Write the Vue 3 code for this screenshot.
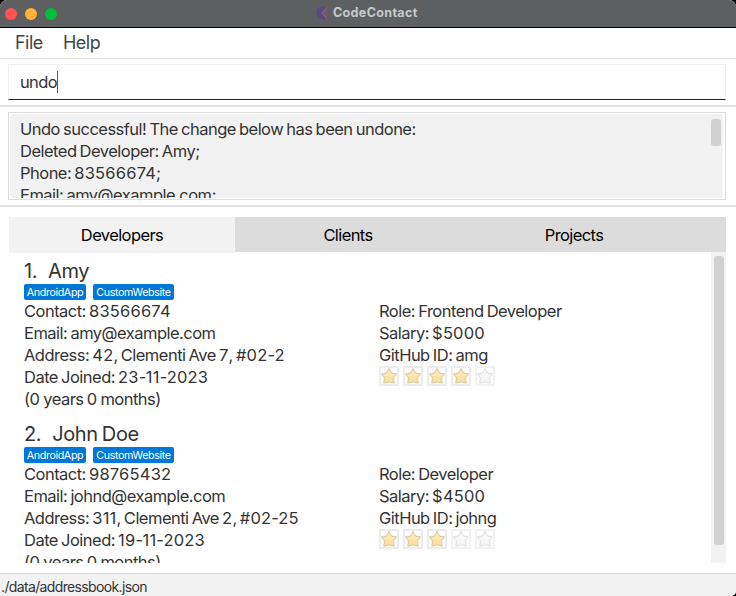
<script setup>
import { h } from 'vue'

const output = [
  'Undo successful! The change below has been undone:',
  'Deleted Developer: Amy;',
  'Phone: 83566674;',
  'Email: amy@example.com;',
]
const tabs = ['Developers', 'Clients', 'Projects']
const developers = [
  {
    name: 'Amy',
    left: ['Contact: 83566674', 'Email: amy@example.com', 'Address: 42, Clementi Ave 7, #02-2', 'Date Joined: 23-11-2023', '(0 years 0 months)'],
    right: ['Role: Frontend Developer', 'Salary: $5000', 'GitHub ID: amg'],
    rating: 4,
  },
  {
    name: 'John Doe',
    left: ['Contact: 98765432', 'Email: johnd@example.com', 'Address: 311, Clementi Ave 2, #02-25', 'Date Joined: 19-11-2023', '(0 years 0 months)'],
    right: ['Role: Developer', 'Salary: $4500', 'GitHub ID: johng'],
    rating: 3,
  },
]

// A line of text whose digit runs are set with wider tracking than its words.
const TextLine = (props) =>
  h('div', { class: 'line' }, props.text.split(/([#$\d]+)/).filter(Boolean).map((part) =>
    /[\d]/.test(part) ? h('span', { class: 'digits' }, part) : part))
TextLine.props = ['text']
</script>

<template>
  <div class="window">
    <header class="titlebar">
      <div class="lights"><i class="red"></i><i class="amber"></i><i class="green"></i></div>
      <div class="title">
        <svg width="13" height="14" viewBox="0 0 13 14">
          <path d="M7 .5C3 .5.5 3.300.5 7S3 13.500 7 13.500L11 12 6 7 11 2Z" fill="#5b4a7c" />
          <path d="M11 1.500 6.500 7l4.500 5.500" fill="none" stroke="#9c5287" stroke-width="1.600" />
        </svg>
        <span>CodeContact</span>
      </div>
    </header>
    <nav class="menu"><span class="file">File</span><span class="help">Help</span></nav>
    <section class="command"><div class="field"><span>undo</span><i class="caret"></i></div></section>
    <section class="result">
      <div class="frame">
        <div class="pane">
          <div class="lines"><TextLine v-for="l in output" :key="l" :text="l" /></div>
          <i class="thumb"></i>
        </div>
      </div>
    </section>
    <main class="content">
      <div class="tabs">
        <div v-for="(t, i) in tabs" :key="t" class="tab" :class="{ active: i === 0 }">{{ t }}</div>
        <div class="rest"></div>
      </div>
      <div class="body">
        <div class="list">
          <article v-for="(d, i) in developers" :key="d.name" class="card">
            <h2><span class="num">{{ i + 1 }}.</span><span>{{ d.name }}</span></h2>
            <div class="tags"><span class="android">AndroidApp</span><span class="custom">CustomWebsite</span></div>
            <div class="cols">
              <div class="left"><TextLine v-for="l in d.left" :key="l" :text="l" /></div>
              <div class="right">
                <TextLine v-for="l in d.right" :key="l" :text="l" />
                <div class="stars">
                  <svg v-for="n in 5" :key="n" :class="{ off: n > d.rating }" width="20" height="20" viewBox="0 0 20 20">
                    <rect x="1" y="1" width="18" height="18" fill="#fff" stroke="#ececec" stroke-width="2" />
                    <path class="star" d="M10 2.400 12.500 7 17.600 7.900 14.600 11.800 15.200 17.200 10 15.900 4.800 17.200 5.400 11.800 2.400 7.900 7.500 7Z" />
                    <path class="shine" d="M10 4 12 7.800 16 8.600 12 11 8 11 4 8.600 8 7.800Z" />
                  </svg>
                </div>
              </div>
            </div>
          </article>
        </div>
        <div class="track"><i></i></div>
      </div>
    </main>
    <footer class="status">./data/addressbook.json</footer>
  </div>
</template>

<style>
body { margin: 0; background: #000; overflow: hidden; }
</style>
<style scoped>
* { box-sizing: border-box; }
.window { width: 736px; height: 596px; display: flex; flex-direction: column; background: #fff; border-radius: 7px 7px 5px 0; overflow: hidden; font-family: Inter, "Liberation Sans", sans-serif; font-size: 16.5px; letter-spacing: -0.52px; word-spacing: -1px; color: #333; white-space: nowrap; }
.titlebar { height: 28px; flex: none; background: #5e5f61; border-bottom: 1px solid #000; display: grid; grid-template-columns: 316px 1fr; align-items: center; }
.lights { display: flex; gap: 8px; padding-left: 5px; }
.lights i { width: 12px; height: 12px; border-radius: 50%; }
.red { background: #ff5450; }
.amber { background: #ffb138; }
.green { background: #00c03a; }
.title { display: flex; align-items: center; gap: 4px; font-size: 12.5px; font-weight: 700; letter-spacing: 0.35px; color: #c9c9ca; line-height: 16px; padding-bottom: 2px; }
.menu { height: 31px; flex: none; border-bottom: 1px solid #ddd; font-size: 18px; line-height: 29px; color: #444; display: flex; padding-left: 15px; }
.file { width: 48px; }
.command { height: 48px; flex: none; border-bottom: 2px solid #e1e1e1; padding: 5px 10px 0 8px; }
.field { height: 36px; display: flex; align-items: center; border: 1px solid #f1f1f1; border-bottom: 1px solid #222; padding-left: 11px; }
.field span { letter-spacing: -0.65px; }
.caret { width: 1px; height: 22px; background: #555; }
.result { height: 100px; flex: none; border-bottom: 2px solid #e1e1e1; padding: 5px 10px 0 8px; }
.frame { height: 88px; border: 1px solid #ddd; padding: 1px 2px 1px 1px; }
.pane { height: 84px; background: #f2f2f2; border-radius: 3px; display: flex; justify-content: space-between; overflow: hidden; padding: 4px 2px 0 10px; }
:deep(.line), .line { height: 22px; line-height: 22px; }
:deep(.digits) { letter-spacing: 0.2px; }
.thumb { width: 10px; height: 27px; margin-top: 1px; background: #d1d1d1; border-radius: 3px; }
.content { height: 366px; flex: none; padding: 10px 10px 0 9px; }
.tabs { height: 35px; display: grid; grid-template-columns: 226px 226px 226px 1fr; background: #dcdcdc; color: #000; line-height: 36px; text-align: center; letter-spacing: -0.6px; }
.active { background: #f2f2f2; }
.body { height: 311px; display: flex; }
.list { flex: 1; overflow: hidden; padding: 5px 0 0 15px; }
.card { height: 163px; }
h2 { margin: 0; height: 27px; line-height: 28px; font-size: 20px; font-weight: 400; letter-spacing: -0.4px; display: flex; gap: 11px; }
.tags { display: flex; gap: 7px; height: 16px; }
.tags span { height: 16px; line-height: 17px; border-radius: 2px; background: #0078d7; color: #fff; font-size: 10.7px; letter-spacing: -0.35px; text-align: center; }
.android { width: 62px; }
.custom { width: 81px; }
.cols { display: grid; grid-template-columns: 355px 1fr; }
.stars { display: flex; gap: 4px; }
.star { fill: #fae1a0; stroke: #d3c3a2; stroke-width: .9; stroke-linejoin: round; }
.shine { fill: #fff; opacity: .25; }
.off { opacity: .65; }
.off .star { fill: #f0f0f0; stroke: #c8c8c8; }
.track { width: 15px; background: #f2f2f2; padding: 4px 2px 0 3px; }
.track i { display: block; height: 289px; background: #d1d1d1; border-radius: 3px; }
.status { height: 23px; flex: none; border-top: 1px solid #d8d8d8; background: #f2f2f2; font-size: 14px; line-height: 26px; padding-left: 1px; letter-spacing: -0.64px; }
</style>
